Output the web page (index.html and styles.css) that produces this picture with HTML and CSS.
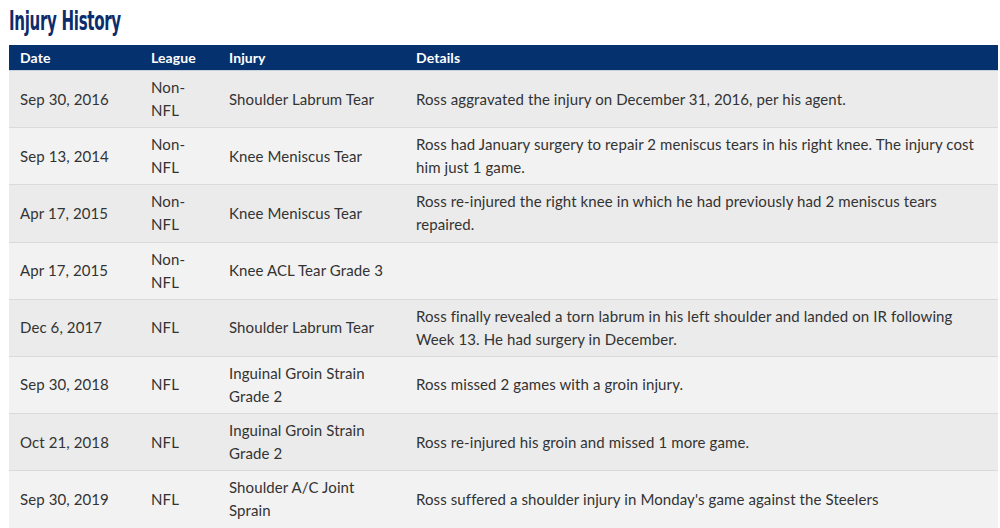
FILE: index.html
```html
<!DOCTYPE html>
<html>
<head>
<meta charset="utf-8">
<link rel="stylesheet" href="styles.css">
</head>
<body>
<div class="page">
  <h2 class="title"><span class="title-text">Injury History</span></h2>
  <table class="injuries">
    <colgroup>
      <col class="c-date"><col class="c-league"><col class="c-injury"><col class="c-details">
    </colgroup>
    <thead>
      <tr><th>Date</th><th>League</th><th>Injury</th><th>Details</th></tr>
    </thead>
    <tbody>
      <tr><td>Sep 30, 2016</td><td>Non-NFL</td><td>Shoulder Labrum Tear</td><td>Ross aggravated the injury on December 31, 2016, per his agent.</td></tr>
      <tr><td>Sep 13, 2014</td><td>Non-NFL</td><td>Knee Meniscus Tear</td><td>Ross had January surgery to repair 2 meniscus tears in his right knee. The injury cost him just 1 game.</td></tr>
      <tr><td>Apr 17, 2015</td><td>Non-NFL</td><td>Knee Meniscus Tear</td><td>Ross re-injured the right knee in which he had previously had 2 meniscus tears repaired.</td></tr>
      <tr><td>Apr 17, 2015</td><td>Non-NFL</td><td>Knee ACL Tear Grade 3</td><td></td></tr>
      <tr><td>Dec 6, 2017</td><td>NFL</td><td>Shoulder Labrum Tear</td><td>Ross finally revealed a torn labrum in his left shoulder and landed on IR following Week 13. He had surgery in December.</td></tr>
      <tr><td>Sep 30, 2018</td><td>NFL</td><td>Inguinal Groin Strain Grade 2</td><td>Ross missed 2 games with a groin injury.</td></tr>
      <tr><td>Oct 21, 2018</td><td>NFL</td><td>Inguinal Groin Strain Grade 2</td><td>Ross re-injured his groin and missed 1 more game.</td></tr>
      <tr><td>Sep 30, 2019</td><td>NFL</td><td>Shoulder A/C Joint Sprain</td><td>Ross suffered a shoulder injury in Monday's game against the Steelers</td></tr>
    </tbody>
  </table>
</div>
</body>
</html>
```

FILE: styles.css
```css
html, body {
  margin: 0;
  padding: 0;
  background: #ffffff;
}

.page {
  padding: 0 2px 0 9px;
  font-family: "Lato", "Liberation Sans", sans-serif;
  color: #333333;
}

.title {
  margin: 0;
  height: 45px;
  line-height: 42px;
  font-family: "DejaVu Sans Condensed", "DejaVu Sans", sans-serif;
  font-weight: bold;
  font-size: 27px;
  color: #0d2c6c;
  white-space: nowrap;
}

.title-text {
  display: inline-block;
  transform: scaleX(0.62);
  transform-origin: left center;
  letter-spacing: -0.5px;
}

.injuries {
  width: 989px;
  border-collapse: collapse;
  table-layout: fixed;
  font-size: 15px;
  letter-spacing: 0.1px;
}

.c-date { width: 131px; }
.c-league { width: 78px; }
.c-injury { width: 187px; }

.injuries th {
  background: #05316f;
  color: #ffffff;
  text-align: left;
  font-weight: bold;
  font-size: 14px;
  height: 25px;
  padding: 0 11px;
  border-bottom: 1px solid #c9d0dc;
}

.injuries td {
  padding: 5px 11px;
  line-height: 23.1px;
  vertical-align: middle;
  border-bottom: 1px solid #dadada;
}

.injuries td:nth-child(2) {
  padding-right: 20px;
}

.injuries tbody tr:nth-child(odd) td {
  background: #ebebeb;
}

.injuries tbody tr:nth-child(even) td {
  background: #f2f2f2;
}
```
